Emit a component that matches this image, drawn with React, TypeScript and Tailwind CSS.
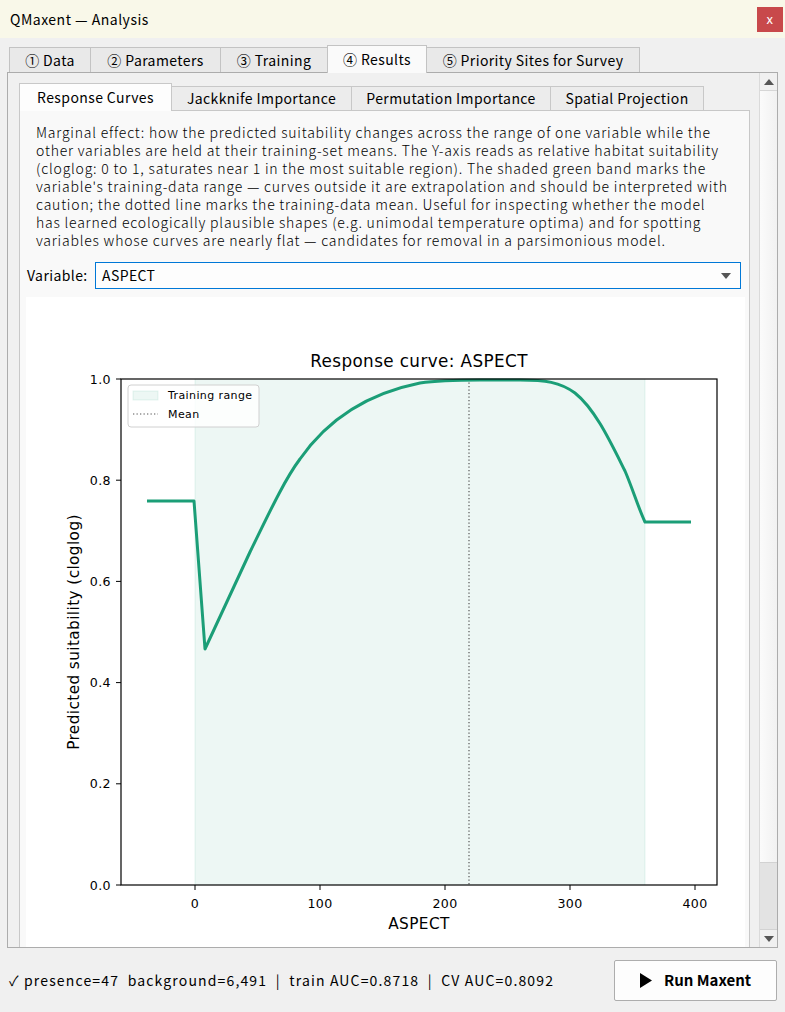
import React from "react";

const TEAL = "#1b9e77";

const outerTabs = [
  { label: "① Data", w: "w-[82px]" },
  { label: "② Parameters", w: "w-[130px]" },
  { label: "③ Training", w: "w-[107px]" },
  { label: "④ Results", w: "w-[100px]", active: true },
  { label: "⑤ Priority Sites for Survey", w: "w-[213px]" },
];

const innerTabs = [
  { label: "Response Curves", w: "w-[153px]", active: true },
  { label: "Jackknife Importance", w: "w-[180px]" },
  { label: "Permutation Importance", w: "w-[199px]" },
  { label: "Spatial Projection", w: "w-[153px]" },
];

const blurb = [
  "Marginal effect: how the predicted suitability changes across the range of one variable while the",
  "other variables are held at their training-set means. The Y-axis reads as relative habitat suitability",
  "(cloglog: 0 to 1, saturates near 1 in the most suitable region). The shaded green band marks the",
  "variable's training-data range — curves outside it are extrapolation and should be interpreted with",
  "caution; the dotted line marks the training-data mean. Useful for inspecting whether the model",
  "has learned ecologically plausible shapes (e.g. unimodal temperature optima) and for spotting",
  "variables whose curves are nearly flat — candidates for removal in a parsimonious model.",
];

// axes box in figure pixels
const AX = { left: 121, right: 717, top: 378, bottom: 884 };
const xPx = (v: number) => 195 + v * 1.25;
const yPx = (v: number) => AX.bottom - v * 506;

function ResponseChart() {
  const yTicks = [0, 0.2, 0.4, 0.6, 0.8, 1.0];
  const xTicks = [0, 100, 200, 300, 400];
  const font = "DejaVu Sans, Verdana, sans-serif";

  return (
    <svg width={719} height={650} viewBox="26 296 719 650" className="block">
      {/* training range band */}
      <rect x={xPx(0)} y={AX.top} width={xPx(360) - xPx(0)} height={AX.bottom - AX.top} fill={TEAL} fillOpacity={0.08} />
      <line x1={xPx(0)} x2={xPx(0)} y1={AX.top} y2={AX.bottom} stroke={TEAL} strokeOpacity={0.1} />
      <line x1={xPx(360)} x2={xPx(360)} y1={AX.top} y2={AX.bottom} stroke={TEAL} strokeOpacity={0.1} />

      {/* mean */}
      <line x1={469} x2={469} y1={AX.top} y2={AX.bottom} stroke="#555" strokeWidth={1.2} strokeDasharray="1.3 2.2" />

      {/* response curve */}
      <path
        d="M147 500 L194 500 L205 648 L250 551 C270 510 285 478 300 458 C330 415 370 392 420 382 C440 379 460 379 480 379 L520 379 C545 379 560 381 575 392 C595 408 610 440 625 470 C632 486 638 506 645 521 L691 521"
        fill="none"
        stroke={TEAL}
        strokeWidth={3}
        strokeLinejoin="round"
      />

      {/* axes frame */}
      <rect x={AX.left} y={AX.top} width={AX.right - AX.left} height={AX.bottom - AX.top} fill="none" stroke="#000" strokeWidth={1.2} />

      {yTicks.map((t) => (
        <g key={t}>
          <line x1={AX.left - 5} x2={AX.left} y1={yPx(t)} y2={yPx(t)} stroke="#000" strokeWidth={1} />
          <text x={111} y={yPx(t) + 4.5} textAnchor="end" fontSize={12.6} fontFamily={font} fill="#000">
            {t.toFixed(1)}
          </text>
        </g>
      ))}
      {xTicks.map((t) => (
        <g key={t}>
          <line x1={xPx(t)} x2={xPx(t)} y1={AX.bottom} y2={AX.bottom + 5} stroke="#000" strokeWidth={1} />
          <text x={xPx(t)} y={907} textAnchor="middle" fontSize={12.6} fontFamily={font} fill="#000">
            {t}
          </text>
        </g>
      ))}

      <text x={419} y={366} textAnchor="middle" fontSize={16.8} fontFamily={font} fill="#000">
        Response curve: ASPECT
      </text>
      <text x={419} y={928} textAnchor="middle" fontSize={15.3} fontFamily={font} fill="#000">
        ASPECT
      </text>
      <text x={79} y={631} textAnchor="middle" fontSize={15.3} fontFamily={font} fill="#000" transform="rotate(-90 79 631)">
        Predicted suitability (cloglog)
      </text>

      {/* legend */}
      <rect x={128} y={384} width={131} height={42} rx={3} fill="#fff" fillOpacity={0.8} stroke="#d0d0d0" />
      <rect x={133} y={390} width={25} height={9} fill={TEAL} fillOpacity={0.08} stroke={TEAL} strokeOpacity={0.1} />
      <line x1={133} x2={158} y1={413} y2={413} stroke="#555" strokeWidth={1.2} strokeDasharray="1.3 2.2" />
      <text x={168} y={398} fontSize={11} fontFamily={font} fill="#000">
        Training range
      </text>
      <text x={168} y={417} fontSize={11} fontFamily={font} fill="#000">
        Mean
      </text>
    </svg>
  );
}

function ScrollBar() {
  return (
    <div className="w-[18px] flex flex-col border-l border-[#dadada] bg-[#f0f0f0]">
      <div className="h-[18px] flex items-center justify-center border-b border-[#d6d6d6]">
        <svg width="10" height="6" viewBox="0 0 10 6">
          <polygon points="5,0 10,6 0,6" fill="#555" />
        </svg>
      </div>
      <div className="h-[771px] bg-gradient-to-r from-[#fbfbfb] to-[#f1f1f1]" />
      <div className="h-[68px] bg-[#e3e3e3] border-y border-[#d2d2d2]" />
      <div className="flex-1 flex items-center justify-center">
        <svg width="10" height="6" viewBox="0 0 10 6">
          <polygon points="0,0 10,0 5,6" fill="#555" />
        </svg>
      </div>
    </div>
  );
}

export default function App() {
  return (
    <div className="w-[785px] h-[1012px] bg-[#f0f0f0] flex flex-col overflow-hidden text-black tracking-[0.4px] font-['Noto_Sans_CJK_KR','Noto_Sans',sans-serif]">
      {/* Title bar */}
      <div className="h-[38px] shrink-0 bg-[#f9f8e9] flex items-center justify-between pl-[10px] pr-[2px]">
        <span className="text-[14px] tracking-[0.5px]">QMaxent — Analysis</span>
        <div className="w-[26px] h-[25px] bg-[#c8494b] text-white flex items-center justify-center text-[13px] leading-none pb-[2px]">
          x
        </div>
      </div>

      {/* Outer tabs */}
      <div className="h-[34px] shrink-0 flex items-end pl-[9px]">
        {outerTabs.map((t, i) => (
          <div
            key={t.label}
            className={`${t.w} flex items-center justify-center text-[14px] border-t border-r border-[#c3c3c3] ${
              i === 0 ? "border-l" : ""
            } ${t.active ? "h-[28px] bg-[#fafafa] relative z-10 -mb-px border-l -ml-px" : "h-[25px] bg-[#e9e9e9]"}`}
          >
            {t.label}
          </div>
        ))}
      </div>

      {/* Tab pane */}
      <div className="mx-[7px] h-[876px] shrink-0 border border-[#acacac] flex bg-[#f0f0f0]">
        <div className="flex-1 overflow-hidden pl-[11px] pr-[9px] pt-[10px]">
          {/* Inner tabs */}
          <div className="h-[27px] flex items-end">
            {innerTabs.map((t, i) => (
              <div
                key={t.label}
                className={`${t.w} flex items-center justify-center text-[14px] border-t border-r border-[#c8c8c8] ${
                  i === 0 ? "border-l" : ""
                } ${t.active ? "h-[28px] bg-[#fdfdfd] relative z-10 -mb-px" : "h-[24px] bg-[#ececec]"}`}
              >
                {t.label}
              </div>
            ))}
          </div>

          <div className="border border-[#c8c8c8] bg-[#f9f9f9] h-[900px]">
            <div className="pl-[16px] pt-[12px] text-[14px] leading-[18px] tracking-[0.8px] font-light">
              {blurb.map((line) => (
                <div key={line} className="whitespace-nowrap">
                  {line}
                </div>
              ))}
            </div>

            <div className="flex items-center mt-[13px] pl-[7px]">
              <span className="w-[68px] text-[14px]">Variable:</span>
              <div className="w-[646px] h-[27px] border border-[#0078d7] bg-[#fdfdfd] flex items-center justify-between pl-[6px] pr-[9px] text-[14px]">
                <span>ASPECT</span>
                <svg width="10" height="6" viewBox="0 0 10 6">
                  <polygon points="0,0 10,0 5,6" fill="#555" />
                </svg>
              </div>
            </div>

            <div className="ml-[6px] mt-[8px] w-[719px] bg-white">
              <ResponseChart />
            </div>
          </div>
        </div>
        <ScrollBar />
      </div>

      {/* Status bar */}
      <div className="flex-1 flex items-center justify-between pl-[9px] pr-[8px]">
        <span className="text-[14px] whitespace-pre tracking-[1.15px]">✓ presence=47  background=6,491  |  train AUC=0.8718  |  CV AUC=0.8092</span>
        <button className="w-[163px] h-[41px] border border-[#adadad] rounded-[2px] bg-[#fdfdfd] flex items-center justify-center gap-[12px] text-[15px] font-semibold tracking-normal">
          <svg width="12" height="15" viewBox="0 0 12 15">
            <polygon points="0,0 12,7.5 0,15" fill="#000" />
          </svg>
          Run Maxent
        </button>
      </div>
    </div>
  );
}
